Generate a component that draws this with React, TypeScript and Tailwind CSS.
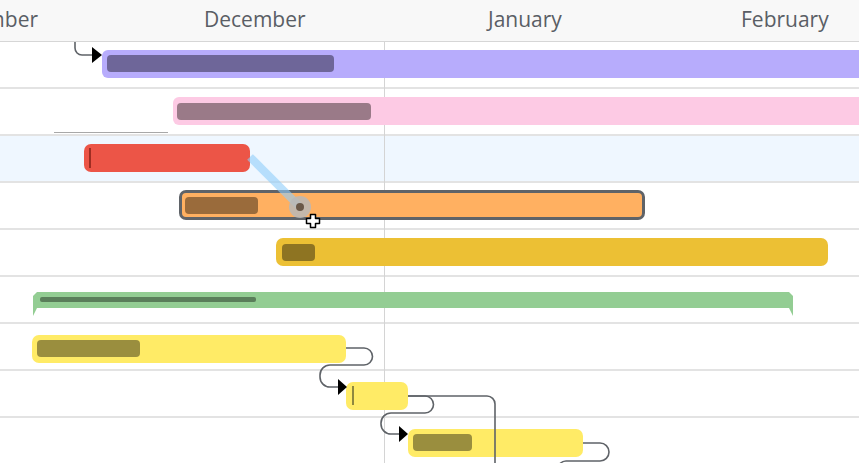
import type { ReactNode } from "react";

type RowProps = {
  highlighted?: boolean;
  children?: ReactNode;
};

function Row({ highlighted, children }: RowProps) {
  return (
    <div
      className={`relative h-[47px] shrink-0 border-b-2 border-[#e3e3e3] ${
        highlighted ? "bg-[#eff7ff]" : "bg-white"
      }`}
    >
      {children}
    </div>
  );
}

function MoveCursor() {
  return (
    <svg
      className="absolute left-[305px] top-[213px] z-30"
      width="16"
      height="16"
      viewBox="0 0 16 16"
    >
      <path
        d="M5.5 1.5h5v4h4v5h-4v4h-5v-4h-4v-5h4z"
        fill="#fff"
        stroke="#000"
        strokeWidth="1.5"
        strokeLinejoin="round"
      />
    </svg>
  );
}

export default function App() {
  return (
    <div
      className="relative h-[463px] w-[859px] overflow-hidden bg-white"
      style={{ fontFamily: '"Open Sans", "Liberation Sans", sans-serif' }}
    >
      <div className="relative h-[42px] border-b border-[#d6d6d6] bg-[#f8f8f8] text-[21px] leading-[28px] text-[#5a5e65]">
        <span className="absolute right-[821px] top-[5px]">November</span>
        <span className="absolute left-[204px] top-[5px]">December</span>
        <span className="absolute left-[488px] top-[5px]">January</span>
        <span className="absolute left-[741px] top-[5px]">February</span>
      </div>

      <div className="absolute bottom-0 left-[384px] top-[42px] z-[5] w-px bg-[#d4d4d4]" />

      <div className="flex flex-col">
        <Row>
          <div className="absolute left-[102px] top-[8px] z-10 h-[28px] w-[800px] rounded-l-[6px] bg-[#b7acfc]">
            <div className="ml-[5px] mt-[5px] h-[17px] w-[227px] rounded-[4px] bg-[#6e6699]" />
          </div>
        </Row>
        <Row>
          <div className="absolute left-[173px] top-[8px] z-10 h-[28px] w-[720px] rounded-l-[6px] bg-[#fdcae4]">
            <div className="ml-[4px] mt-[6px] h-[17px] w-[194px] rounded-[4px] bg-[#9a7a88]" />
          </div>
          <div className="absolute bottom-[1px] left-[54px] h-px w-[114px] bg-[#a8a8a8]" />
        </Row>
        <Row highlighted>
          <div className="absolute left-[84px] top-[8px] z-10 h-[28px] w-[166px] rounded-[7px] bg-[#ec5547]">
            <div className="ml-[5px] mt-[4px] h-[20px] w-[2px] bg-[#9e2d22]" />
          </div>
        </Row>
        <Row>
          <div className="absolute left-[179px] top-[7px] z-10 h-[30px] w-[466px] rounded-[7px] border-[3px] border-[#5f6368] bg-[#ffb061]">
            <div className="ml-[3px] mt-[4px] h-[17px] w-[73px] rounded-[4px] bg-[#9a6b3b]" />
          </div>
        </Row>
        <Row>
          <div className="absolute left-[276px] top-[8px] z-10 h-[28px] w-[552px] rounded-[7px] bg-[#ecc034]">
            <div className="ml-[6px] mt-[6px] h-[17px] w-[33px] rounded-[4px] bg-[#8e7422]" />
          </div>
        </Row>
        <Row>
          <svg
            className="absolute left-[33px] top-[15px] z-10"
            width="761"
            height="25"
            viewBox="0 0 761 25"
          >
            <polygon
              points="4,0 756,0 760,4 760,24 756,16 0,16 0,24 0,4"
              fill="#93cd93"
            />
            <polygon points="0,16 4,16 0,24" fill="#93cd93" />
          </svg>
          <div className="absolute left-[40px] top-[20px] z-10 h-[5px] w-[216px] rounded-[2px] bg-[#5a7e5a]" />
        </Row>
        <Row>
          <div className="absolute left-[32px] top-[11px] z-10 h-[28px] w-[314px] rounded-[7px] bg-[#ffeb66]">
            <div className="ml-[5px] mt-[5px] h-[17px] w-[103px] rounded-[4px] bg-[#9a8e3e]" />
          </div>
        </Row>
        <Row>
          <div className="absolute left-[346px] top-[11px] z-10 h-[28px] w-[62px] rounded-[7px] bg-[#ffeb66]">
            <div className="ml-[6px] mt-[4px] h-[19px] w-[2px] bg-[#8f883f]" />
          </div>
        </Row>
        <Row>
          <div className="absolute left-[408px] top-[11px] z-10 h-[28px] w-[175px] rounded-[7px] bg-[#ffeb66]">
            <div className="ml-[5px] mt-[5px] h-[17px] w-[59px] rounded-[4px] bg-[#9a8e3e]" />
          </div>
        </Row>
      </div>

      <svg
        className="pointer-events-none absolute left-0 top-0 z-20"
        width="859"
        height="463"
        viewBox="0 0 859 463"
      >
        <g fill="none" stroke="#5f6368" strokeWidth="1.6">
          <path d="M75 42 V48 A7 7 0 0 0 82 55 H93" />
          <path d="M346 348 H364 A8.5 8.5 0 0 1 364 365 H330 A10 10 0 0 0 320 375 V377 A10 10 0 0 0 330 387 H339" />
          <path d="M408 396 H425 A8.5 8.5 0 0 1 425 413 H391 A10 10 0 0 0 381 423 V424 A10 10 0 0 0 391 434 H400" />
          <path d="M408 396 H487 A8 8 0 0 1 495 404 V470" />
          <path d="M583 443 H600 A9 9 0 0 1 600 461 H566 A8 8 0 0 0 558 469" />
        </g>
        <g fill="#000">
          <polygon points="92,47 102,55 92,63" />
          <polygon points="338,379 347,387 338,395" />
          <polygon points="399,426 408,434 399,442" />
        </g>
        <line
          x1="250"
          y1="157"
          x2="300"
          y2="207"
          stroke="#8fcdfa"
          strokeOpacity="0.6"
          strokeWidth="8"
        />
        <circle cx="300" cy="207" r="11" fill="#b9b9b9" fillOpacity="0.85" />
        <circle cx="300" cy="207" r="4" fill="#6a5848" />
      </svg>

      <MoveCursor />
    </div>
  );
}
